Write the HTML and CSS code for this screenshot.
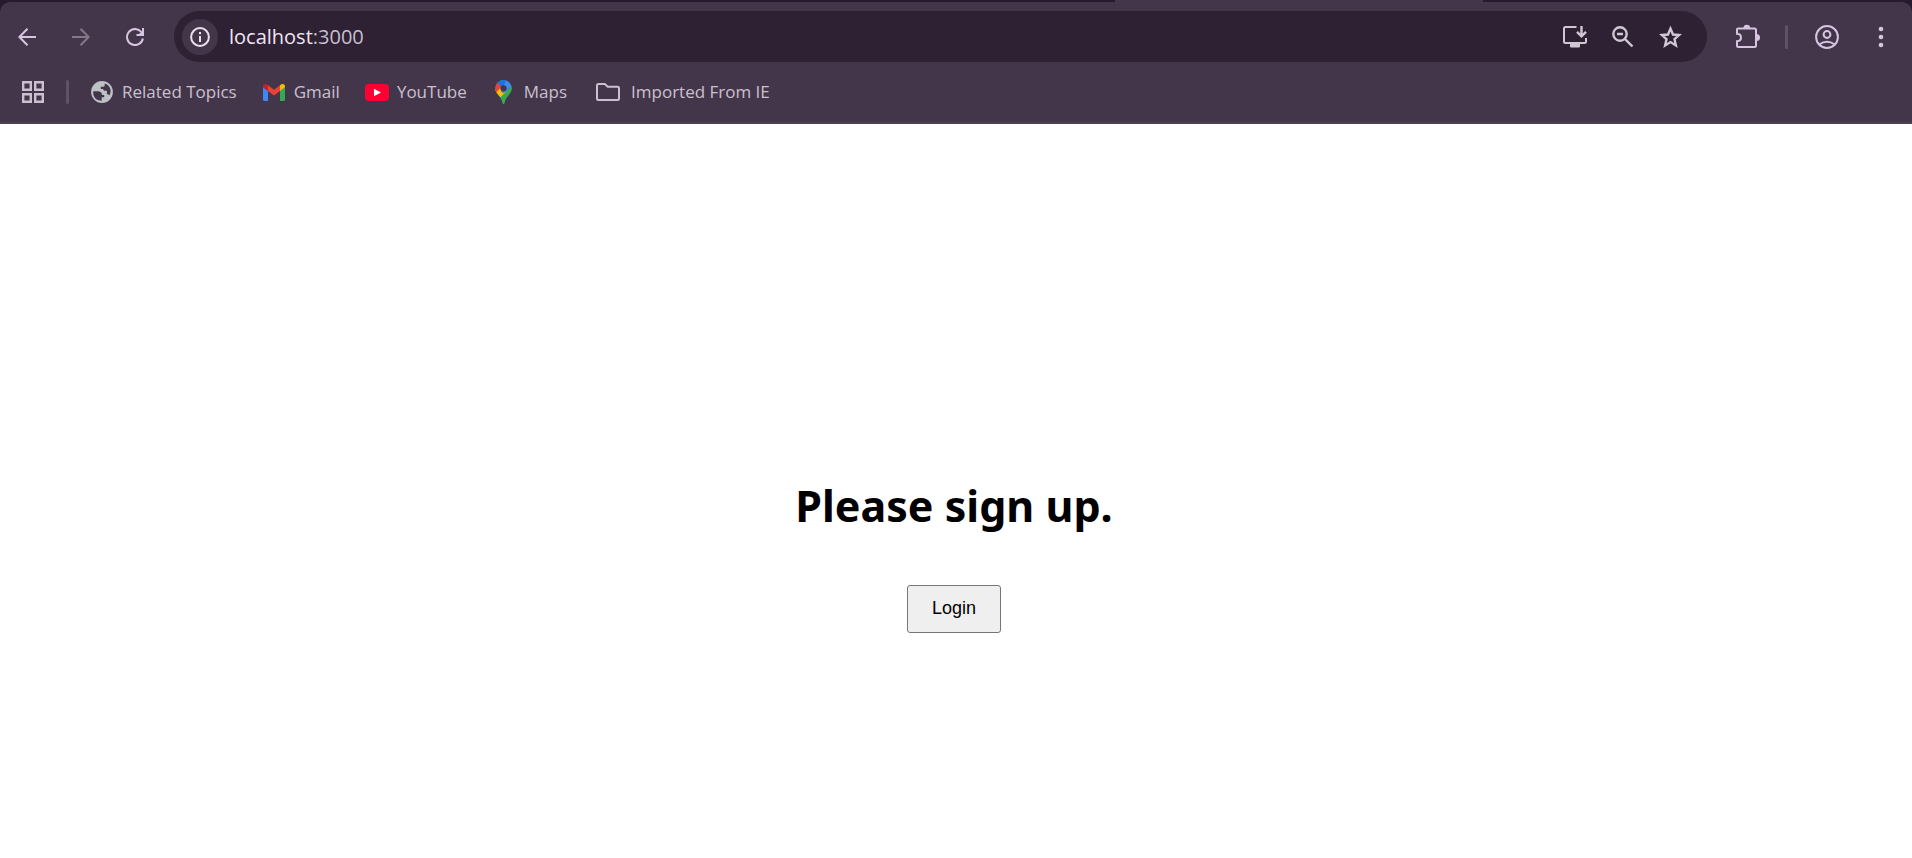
FILE: index.html
```html
<!DOCTYPE html>
<html lang="en">
<head>
<meta charset="utf-8">
<title>localhost:3000</title>
<link rel="stylesheet" href="styles.css">
</head>
<body>
<header class="browser">
  <div class="tabstrip"><span class="tab-foot"></span></div>
  <div class="chrome">
    <nav class="toolbar" aria-label="Browser toolbar">
      <button class="tool" aria-label="Back">
        <svg width="18" height="18" viewBox="0 0 18 18"><path class="line" d="M18 9H2M9.500 .8L1.400 9l8.100 8.200"/></svg>
      </button>
      <button class="tool tool-off" aria-label="Forward">
        <svg width="18" height="18" viewBox="0 0 18 18"><path class="line" d="M0 9h16M8.500 .8L16.600 9l-8.100 8.200"/></svg>
      </button>
      <button class="tool" aria-label="Reload">
        <svg width="18" height="18" viewBox="0 0 18 18"><path class="line" d="M15.300 4A8 8 0 1 0 16.900 10.500"/><path class="line" d="M17 0v7H10.500"/><path class="solid" d="M12 7L17 2v5z"/></svg>
      </button>
      <div class="omnibox">
        <button class="site-info" aria-label="Site information">
          <svg width="20" height="20" viewBox="0 0 20 20"><circle class="line" cx="10" cy="10" r="8.900"/><path class="line" d="M10 9v6M10 5v2.200"/></svg>
        </button>
        <a class="address" href="#"><span class="host">localhost</span>:3000</a>
        <div class="omni-actions">
          <button class="mini" aria-label="Install app">
            <svg width="24" height="22" viewBox="0 0 24 22"><path class="line" d="M13.500 1H2.500Q1 1 1 2.500v13Q1 17 2.500 17h19Q23 17 23 15.500V12"/><path class="solid" d="M7 17h10v3.500q0 1-1 1H8q-1 0-1-1z"/><path class="line bold" d="M18.500 0v10M14 5.800l4.500 4.500L23 5.800"/></svg>
          </button>
          <button class="mini" aria-label="Zoom">
            <svg width="22" height="22" viewBox="0 0 22 22"><circle class="line bold" cx="8" cy="8" r="6.700"/><path class="line bold" d="M12.800 12.800L20.500 20.500M5 8h6"/></svg>
          </button>
          <button class="mini" aria-label="Bookmark this page">
            <svg width="23" height="22" viewBox="0 0 23 22"><path class="line bold" d="M11.500 2.600L14 8.500l6.200.5-4.700 4.200 1.400 6.200-5.400-3.300-5.400 3.300 1.400-6.200L2.800 9 9 8.500z"/></svg>
          </button>
        </div>
      </div>
      <div class="right-tools">
        <button class="mini" aria-label="Extensions">
          <svg width="26" height="25" viewBox="0 0 26 25"><path class="line" d="M3 4.500h16.500q1.500 0 1.500 1.500v15.500q0 1.500-1.500 1.500H3.500Q2 23 2 21.500v-4.300q4-.2 4-3.700T2 9.800V5.500q0-1 1-1z"/><path class="solid" d="M8.500 4a3.300 3.300 0 0 1 6.600 0zM21.500 10a3.500 3.500 0 0 1 0 7z"/></svg>
        </button>
        <span class="divider"></span>
        <button class="mini" aria-label="Profile">
          <svg width="24" height="24" viewBox="0 0 24 24"><circle class="line" cx="12" cy="12" r="10.900"/><circle class="line" cx="12" cy="9.500" r="3.400"/><path class="line" d="M4.500 19.300q7.500-5.200 15 0"/></svg>
        </button>
        <button class="mini" aria-label="Menu">
          <svg width="6" height="22" viewBox="0 0 6 22"><circle class="solid" cx="3" cy="3" r="2.300"/><circle class="solid" cx="3" cy="11" r="2.300"/><circle class="solid" cx="3" cy="19" r="2.300"/></svg>
        </button>
      </div>
    </nav>
    <nav class="bookmarks" aria-label="Bookmarks">
      <button class="mini apps" aria-label="Apps">
        <svg width="22" height="22" viewBox="0 0 22 22"><path class="box" d="M1.200 1.200h7.600v7.600h-7.600zM13.200 1.200h7.600v7.600h-7.600zM1.200 13.200h7.600v7.600h-7.600zM13.200 13.200h7.600v7.600h-7.600z"/></svg>
      </button>
      <span class="divider"></span>
      <a class="bookmark" href="#">
        <span class="favicon"><svg width="22" height="22" viewBox="0 0 22 22"><circle cx="11" cy="11" r="10.900" fill="#bdc1c6"/><path fill="#43364a" d="M2.300 10.200h5.200q3.500.4 3.500 3.800h2.200v2.200h-2.500v3.500Q4.800 19.800 2.600 14.500 1.900 12.300 2.300 10.200zM13.700 2.600q4.200 1.200 5.800 5.700.6 3.200-.9 6.200-.8-1.400-2.700-1.500v-3.200h-2.400q-1.300-.2-1.300-1.700H9.800V5.800h2.700q1.200-.2 1.200-1.600z"/></svg></span>
        <span>Related Topics</span>
      </a>
      <a class="bookmark" href="#">
        <span class="favicon"><svg width="22" height="17" viewBox="0 0 22 17"><path fill="#4285f4" d="M0 3l5 3.700V17H1.500Q0 17 0 15.500z"/><path fill="#34a853" d="M17 6.700L22 3v12.500q0 1.500-1.500 1.500H17z"/><path fill="#ea4335" d="M5 1.200l6 4.500 6-4.500v5.700l-6 4.500-6-4.500z"/><path fill="#c5221f" d="M0 2.500C0 .2 2.400-.7 4 .5l1 .7v5.700L0 3.200z"/><path fill="#fbbc04" d="M22 2.500C22 .2 19.600-.7 18 .5l-1 .7v5.700l5-3.700z"/></svg></span>
        <span>Gmail</span>
      </a>
      <a class="bookmark" href="#">
        <span class="favicon"><svg width="24" height="17" viewBox="0 0 24 17"><rect width="24" height="17" rx="4" fill="#ff0033"/><path fill="#fff" d="M9 4.700l7 3.800-7 3.800z"/></svg></span>
        <span>YouTube</span>
      </a>
      <a class="bookmark" href="#">
        <span class="favicon"><svg width="17" height="24" viewBox="0 0 17 24"><clipPath id="pin"><path d="M8.500 0A8.300 8.300 0 0 1 16.700 8.300C16.700 14 10.800 16 9.500 22.500Q9.200 24 8.500 24T7.500 22.500C6.200 16 .3 14 .3 8.300A8.300 8.300 0 0 1 8.500 0z"/></clipPath><g clip-path="url(#pin)"><path fill="#34a853" d="M0 0h17v24H0z"/><path fill="#fbbc04" d="M0 17.500V10L4 6.500 11 12 4.500 18z"/><path fill="#ea4335" d="M0 0v12.300l1.500 0L8 5 2 1z"/><path fill="#1a73e8" d="M2 2.800l6 5L13 0H3z"/><path fill="#4285f4" d="M11.300 0L17 4v2L8.500 13.500 6 11.300z"/><path fill="#34a853" d="M17 5.500L5 19l3 5h9z"/></g><circle cx="8.500" cy="8.300" r="3.100" fill="#43364a"/></svg></span>
        <span>Maps</span>
      </a>
      <a class="bookmark bookmark-folder" href="#">
        <span class="favicon"><svg width="24" height="18" viewBox="0 0 24 18"><path class="line" d="M2.500 1h6.300l3 2.700h9.700Q23 3.700 23 5.200v10.300q0 1.500-1.500 1.500h-19Q1 17 1 15.500v-13Q1 1 2.500 1z"/></svg></span>
        <span>Imported From IE</span>
      </a>
    </nav>
  </div>
</header>
<main class="page">
  <h1 class="title">Please sign up.</h1>
  <button class="login">Login</button>
</main>
</body>
</html>
```
FILE: styles.css
```css
* { box-sizing: border-box; }

body {
  margin: 0;
  min-height: 100vh;
  display: flex;
  flex-direction: column;
  background: #fff;
  font-family: "Open Sans", "Noto Sans", sans-serif;
}

button {
  font: inherit;
  color: inherit;
  cursor: pointer;
}

svg { display: block; flex: none; }
.line { fill: none; stroke: currentColor; stroke-width: 2; }
.bold { stroke-width: 2.4; }
.solid { fill: currentColor; }
.box { fill: none; stroke: currentColor; stroke-width: 2.4; }

.browser { background: #261a2e; }

.tabstrip {
  height: 2px;
  display: grid;
  grid-template-columns: 1115fr 368fr 429fr;
}
.tab-foot { grid-column: 2; background: #43364a; }

.chrome {
  background: #43364a;
  border-radius: 10px 10px 0 0;
  border-bottom: 2px solid #4d4053;
}

.toolbar {
  display: flex;
  align-items: center;
  padding: 9px 28px 0 0;
  color: #d7c4e0;
}

.tool {
  width: 54px;
  height: 48px;
  padding: 0;
  border: 0;
  background: none;
  display: grid;
  place-items: center;
}
.tool-off { color: #837788; }

.omnibox {
  flex: 1;
  height: 51px;
  margin-left: 12px;
  padding: 0 25px 0 8px;
  border-radius: 26px;
  background: #2d2133;
  display: flex;
  align-items: center;
  color: #cfc7d2;
}

.site-info {
  width: 36px;
  height: 36px;
  padding: 0;
  border: 0;
  border-radius: 50%;
  background: #43364a;
  color: #e9e0ec;
  display: grid;
  place-items: center;
}

.address {
  flex: 1;
  margin-left: 11px;
  font-size: 20px;
  line-height: 28px;
  color: #c9bfce;
  text-decoration: none;
}
.host { color: #f0e6f3; }

.omni-actions { display: flex; align-items: center; gap: 25px; }

.mini {
  padding: 0;
  border: 0;
  background: none;
}

.right-tools {
  display: flex;
  align-items: center;
  gap: 26px;
  margin-left: 28px;
}
.right-tools .divider { margin: 0 1px 0 -2px; }
.right-tools .mini:last-child { margin-left: 13px; }

.divider {
  width: 3px;
  height: 24px;
  border-radius: 2px;
  background: #5f5167;
}

.bookmarks {
  height: 60px;
  display: flex;
  align-items: center;
  gap: 21px;
  padding: 0 22px;
  color: #cbc0cf;
}
.apps { margin-right: 1px; }

.bookmark {
  display: flex;
  align-items: center;
  gap: 8px;
  margin-right: 4px;
  font-size: 17px;
  line-height: 24px;
  color: #cbc0cf;
  text-decoration: none;
  white-space: nowrap;
}
.bookmark-folder { gap: 11px; margin-left: 4px; }

.favicon {
  width: 24px;
  display: grid;
  place-items: center;
}

.page {
  flex: 1;
  display: flex;
  flex-direction: column;
  align-items: center;
  padding: 352px 4px 32px 0;
}

.title {
  margin: 0;
  font-family: "Noto Sans", "Open Sans", sans-serif;
  font-size: 43px;
  line-height: 60px;
  font-weight: 700;
  color: #000;
}

.login {
  margin-top: 49px;
  padding: 11px 24px 13px;
  border: 1px solid #767676;
  border-radius: 3px;
  background: #efefef;
  color: #000;
  font-family: "Liberation Sans", Arial, sans-serif;
  font-size: 18px;
  line-height: 22px;
}
```
